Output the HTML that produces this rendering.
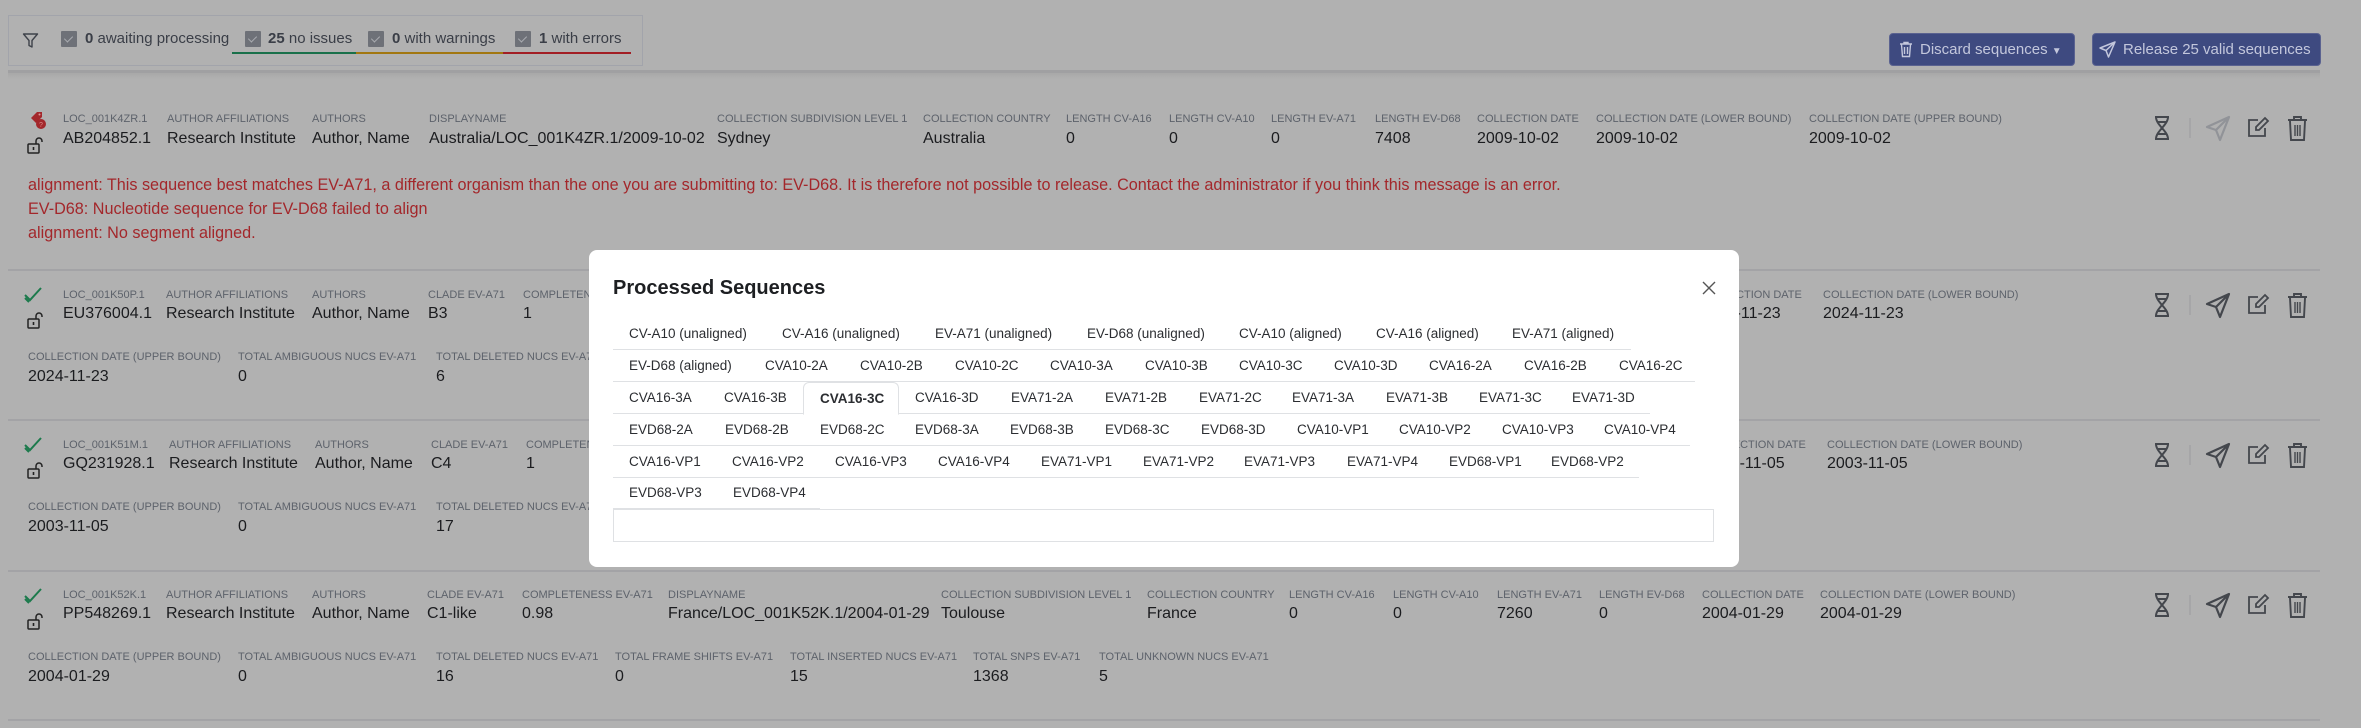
<!DOCTYPE html>
<html><head><meta charset="utf-8"><style>
*{margin:0;padding:0;box-sizing:border-box}
body{width:2361px;height:728px;background:#b1b1b1;font-family:"Liberation Sans",sans-serif;position:relative;overflow:hidden;color:#1d1f22}
.a{position:absolute;white-space:nowrap}
.l{position:absolute;white-space:nowrap;font-size:11px;color:#5d626b;text-transform:uppercase;line-height:14px}
.v{position:absolute;white-space:nowrap;font-size:16px;color:#1b1c1f;line-height:20px}
.sep{position:absolute;left:8px;width:2312px;height:2px;background:#a3a3a6}
.err{position:absolute;left:28px;font-size:16.2px;color:#a3272b;white-space:nowrap;line-height:20px}
.cb{position:absolute;top:31px;width:16px;height:16px;background:#6e7178;border-radius:1px}
.cb:after{content:"";position:absolute;left:5px;top:3px;width:4px;height:7px;border:solid #a9abb0;border-width:0 1.5px 1.5px 0;transform:rotate(45deg)}
.ft{position:absolute;top:29px;font-size:15px;color:#3a3e47;line-height:20px;white-space:nowrap}
.btn{position:absolute;top:33px;height:33px;background:#3e4a80;border-radius:4px;color:#c3c7dc;font-size:15px;line-height:31px;white-space:nowrap;border:1px solid #5a6290}
.modal{position:absolute;left:589px;top:250px;width:1150px;height:317px;background:#fff;border-radius:8px}
.tr{position:absolute;left:613px;height:32px;border-bottom:1px solid #dfe1e4}
.t{position:absolute;top:0;height:32px;line-height:31px;font-size:13.5px;color:#2b2d31;white-space:nowrap;padding-left:16px}
.act{position:absolute;background:#fff;border:1px solid #dfe1e4;border-bottom:1px solid #fff;border-radius:6px 6px 0 0;font-weight:bold}
svg{position:absolute}
</style></head><body>

<div class="a" style="left:8px;top:15px;width:635px;height:51px;border:1px solid #a2a4ab"></div>
<svg style="left:22px;top:32px" width="17" height="17" viewBox="0 0 17 17"><path d="M1.5 2h14l-5.5 6.5v6.5l-3-1.5v-5z" fill="none" stroke="#3e424a" stroke-width="1.4" stroke-linejoin="round"/></svg>
<div class="cb" style="left:61px"></div><div class="ft" style="left:85px"><b>0</b> awaiting processing</div>
<div class="cb" style="left:245px"></div><div class="ft" style="left:268px"><b>25</b> no issues</div>
<div class="cb" style="left:368px"></div><div class="ft" style="left:392px"><b>0</b> with warnings</div>
<div class="cb" style="left:515px"></div><div class="ft" style="left:539px"><b>1</b> with errors</div>
<div class="a" style="left:232px;top:52px;width:124px;height:2px;background:#19704a"></div>
<div class="a" style="left:356px;top:52px;width:147px;height:2px;background:#a27710"></div>
<div class="a" style="left:503px;top:52px;width:128px;height:2px;background:#a21e24"></div>

<div class="btn" style="left:1889px;width:186px;padding-left:30px">Discard sequences <span style="font-size:10px">▼</span></div>
<svg style="left:1899px;top:41px" width="14" height="17" viewBox="0 0 14 17"><path d="M1 3h12M5 3V1.5h4V3M2.5 3.5l1 12h7l1-12M5.5 6v7M8.5 6v7" fill="none" stroke="#c3c7dc" stroke-width="1.4"/></svg>
<div class="btn" style="left:2092px;width:229px;padding-left:30px">Release 25 valid sequences</div>
<svg style="left:2099px;top:41px" width="17" height="17" viewBox="0 0 17 17"><path d="M16 1L1 7l6 2.5L9.5 16zM7 9.5L16 1" fill="none" stroke="#c3c7dc" stroke-width="1.5" stroke-linejoin="round"/></svg>

<div class="a" style="left:8px;top:70px;width:2312px;height:3px;background:#a0a0a2"></div>
<div class="a" style="left:8px;top:73px;width:2312px;height:6px;background:linear-gradient(#a8a8a8,#b1b1b1)"></div>

<svg style="left:29px;top:111px" width="18" height="19" viewBox="0 0 18 19"><path d="M2 7L8 1h5v5L7 12z" fill="#a3272b"/><circle cx="12" cy="13" r="5" fill="#a3272b"/><text x="12" y="16" font-size="7" fill="#d88" text-anchor="middle" font-family="Liberation Sans">?</text><circle cx="10.5" cy="3.5" r="1" fill="#d99"/></svg>
<svg style="left:27px;top:137px" width="18" height="17" viewBox="0 0 18 17"><rect x="1" y="7" width="11" height="9" rx="1" fill="none" stroke="#222" stroke-width="1.5"/><path d="M9 7V4a3 3 0 0 1 6 0v1" fill="none" stroke="#222" stroke-width="1.5"/><path d="M6.5 10v3" stroke="#222" stroke-width="1.6"/></svg>
<div class="l" style="left:63px;top:112px">LOC_001K4ZR.1</div><div class="v" style="left:63px;top:129px">AB204852.1</div>
<div class="l" style="left:167px;top:112px">Author affiliations</div><div class="v" style="left:167px;top:129px">Research Institute</div>
<div class="l" style="left:312px;top:112px">Authors</div><div class="v" style="left:312px;top:129px">Author, Name</div>
<div class="l" style="left:429px;top:112px">displayName</div><div class="v" style="left:429px;top:129px">Australia/LOC_001K4ZR.1/2009-10-02</div>
<div class="l" style="left:717px;top:112px">Collection subdivision level 1</div><div class="v" style="left:717px;top:129px">Sydney</div>
<div class="l" style="left:923px;top:112px">Collection country</div><div class="v" style="left:923px;top:129px">Australia</div>
<div class="l" style="left:1066px;top:112px">Length CV-A16</div><div class="v" style="left:1066px;top:129px">0</div>
<div class="l" style="left:1169px;top:112px">Length CV-A10</div><div class="v" style="left:1169px;top:129px">0</div>
<div class="l" style="left:1271px;top:112px">Length EV-A71</div><div class="v" style="left:1271px;top:129px">0</div>
<div class="l" style="left:1375px;top:112px">Length EV-D68</div><div class="v" style="left:1375px;top:129px">7408</div>
<div class="l" style="left:1477px;top:112px">Collection date</div><div class="v" style="left:1477px;top:129px">2009-10-02</div>
<div class="l" style="left:1596px;top:112px">Collection date (lower bound)</div><div class="v" style="left:1596px;top:129px">2009-10-02</div>
<div class="l" style="left:1809px;top:112px">Collection date (upper bound)</div><div class="v" style="left:1809px;top:129px">2009-10-02</div>
<div class="err" style="top:175px">alignment: This sequence best matches EV-A71, a different organism than the one you are submitting to: EV-D68. It is therefore not possible to release. Contact the administrator if you think this message is an error.</div>
<div class="err" style="top:199px">EV-D68: Nucleotide sequence for EV-D68 failed to align</div>
<div class="err" style="top:223px">alignment: No segment aligned.</div>

<div class="sep" style="top:269px"></div>
<div class="sep" style="top:419px"></div>
<div class="sep" style="top:570px"></div>
<div class="sep" style="top:719px"></div>

<svg style="left:24px;top:287px" width="18" height="16" viewBox="0 0 18 16"><path d="M1 8l5 5L17 1M1 11l4 4" fill="none" stroke="#1c7a4c" stroke-width="2"/></svg>
<svg style="left:27px;top:312px" width="18" height="17" viewBox="0 0 18 17"><rect x="1" y="7" width="11" height="9" rx="1" fill="none" stroke="#222" stroke-width="1.5"/><path d="M9 7V4a3 3 0 0 1 6 0v1" fill="none" stroke="#222" stroke-width="1.5"/><path d="M6.5 10v3" stroke="#222" stroke-width="1.6"/></svg>
<div class="l" style="left:63px;top:288px">LOC_001K50P.1</div><div class="v" style="left:63px;top:304px">EU376004.1</div>
<div class="l" style="left:166px;top:288px">Author affiliations</div><div class="v" style="left:166px;top:304px">Research Institute</div>
<div class="l" style="left:312px;top:288px">Authors</div><div class="v" style="left:312px;top:304px">Author, Name</div>
<div class="l" style="left:428px;top:288px">Clade EV-A71</div><div class="v" style="left:428px;top:304px">B3</div>
<div class="l" style="left:523px;top:288px">Completeness EV-A71</div><div class="v" style="left:523px;top:304px">1</div>
<div class="l" style="left:1700px;top:288px">Collection date</div><div class="v" style="left:1700px;top:304px">2024-11-23</div>
<div class="l" style="left:1823px;top:288px">Collection date (lower bound)</div><div class="v" style="left:1823px;top:304px">2024-11-23</div>
<div class="l" style="left:28px;top:350px">Collection date (upper bound)</div><div class="v" style="left:28px;top:367px">2024-11-23</div>
<div class="l" style="left:238px;top:350px">Total ambiguous nucs EV-A71</div><div class="v" style="left:238px;top:367px">0</div>
<div class="l" style="left:436px;top:350px">Total deleted nucs EV-A71</div><div class="v" style="left:436px;top:367px">6</div>

<svg style="left:24px;top:437px" width="18" height="16" viewBox="0 0 18 16"><path d="M1 8l5 5L17 1M1 11l4 4" fill="none" stroke="#1c7a4c" stroke-width="2"/></svg>
<svg style="left:27px;top:462px" width="18" height="17" viewBox="0 0 18 17"><rect x="1" y="7" width="11" height="9" rx="1" fill="none" stroke="#222" stroke-width="1.5"/><path d="M9 7V4a3 3 0 0 1 6 0v1" fill="none" stroke="#222" stroke-width="1.5"/><path d="M6.5 10v3" stroke="#222" stroke-width="1.6"/></svg>
<div class="l" style="left:63px;top:438px">LOC_001K51M.1</div><div class="v" style="left:63px;top:454px">GQ231928.1</div>
<div class="l" style="left:169px;top:438px">Author affiliations</div><div class="v" style="left:169px;top:454px">Research Institute</div>
<div class="l" style="left:315px;top:438px">Authors</div><div class="v" style="left:315px;top:454px">Author, Name</div>
<div class="l" style="left:431px;top:438px">Clade EV-A71</div><div class="v" style="left:431px;top:454px">C4</div>
<div class="l" style="left:526px;top:438px">Completeness EV-A71</div><div class="v" style="left:526px;top:454px">1</div>
<div class="l" style="left:1704px;top:438px">Collection date</div><div class="v" style="left:1704px;top:454px">2003-11-05</div>
<div class="l" style="left:1827px;top:438px">Collection date (lower bound)</div><div class="v" style="left:1827px;top:454px">2003-11-05</div>
<div class="l" style="left:28px;top:500px">Collection date (upper bound)</div><div class="v" style="left:28px;top:517px">2003-11-05</div>
<div class="l" style="left:238px;top:500px">Total ambiguous nucs EV-A71</div><div class="v" style="left:238px;top:517px">0</div>
<div class="l" style="left:436px;top:500px">Total deleted nucs EV-A71</div><div class="v" style="left:436px;top:517px">17</div>

<svg style="left:24px;top:588px" width="18" height="16" viewBox="0 0 18 16"><path d="M1 8l5 5L17 1M1 11l4 4" fill="none" stroke="#1c7a4c" stroke-width="2"/></svg>
<svg style="left:27px;top:613px" width="18" height="17" viewBox="0 0 18 17"><rect x="1" y="7" width="11" height="9" rx="1" fill="none" stroke="#222" stroke-width="1.5"/><path d="M9 7V4a3 3 0 0 1 6 0v1" fill="none" stroke="#222" stroke-width="1.5"/><path d="M6.5 10v3" stroke="#222" stroke-width="1.6"/></svg>
<div class="l" style="left:63px;top:588px">LOC_001K52K.1</div><div class="v" style="left:63px;top:604px">PP548269.1</div>
<div class="l" style="left:166px;top:588px">Author affiliations</div><div class="v" style="left:166px;top:604px">Research Institute</div>
<div class="l" style="left:312px;top:588px">Authors</div><div class="v" style="left:312px;top:604px">Author, Name</div>
<div class="l" style="left:427px;top:588px">Clade EV-A71</div><div class="v" style="left:427px;top:604px">C1-like</div>
<div class="l" style="left:522px;top:588px">Completeness EV-A71</div><div class="v" style="left:522px;top:604px">0.98</div>
<div class="l" style="left:668px;top:588px">displayName</div><div class="v" style="left:668px;top:604px">France/LOC_001K52K.1/2004-01-29</div>
<div class="l" style="left:941px;top:588px">Collection subdivision level 1</div><div class="v" style="left:941px;top:604px">Toulouse</div>
<div class="l" style="left:1147px;top:588px">Collection country</div><div class="v" style="left:1147px;top:604px">France</div>
<div class="l" style="left:1289px;top:588px">Length CV-A16</div><div class="v" style="left:1289px;top:604px">0</div>
<div class="l" style="left:1393px;top:588px">Length CV-A10</div><div class="v" style="left:1393px;top:604px">0</div>
<div class="l" style="left:1497px;top:588px">Length EV-A71</div><div class="v" style="left:1497px;top:604px">7260</div>
<div class="l" style="left:1599px;top:588px">Length EV-D68</div><div class="v" style="left:1599px;top:604px">0</div>
<div class="l" style="left:1702px;top:588px">Collection date</div><div class="v" style="left:1702px;top:604px">2004-01-29</div>
<div class="l" style="left:1820px;top:588px">Collection date (lower bound)</div><div class="v" style="left:1820px;top:604px">2004-01-29</div>
<div class="l" style="left:28px;top:650px">Collection date (upper bound)</div><div class="v" style="left:28px;top:667px">2004-01-29</div>
<div class="l" style="left:238px;top:650px">Total ambiguous nucs EV-A71</div><div class="v" style="left:238px;top:667px">0</div>
<div class="l" style="left:436px;top:650px">Total deleted nucs EV-A71</div><div class="v" style="left:436px;top:667px">16</div>
<div class="l" style="left:615px;top:650px">Total frame shifts EV-A71</div><div class="v" style="left:615px;top:667px">0</div>
<div class="l" style="left:790px;top:650px">Total inserted nucs EV-A71</div><div class="v" style="left:790px;top:667px">15</div>
<div class="l" style="left:973px;top:650px">Total SNPs EV-A71</div><div class="v" style="left:973px;top:667px">1368</div>
<div class="l" style="left:1099px;top:650px">Total unknown nucs EV-A71</div><div class="v" style="left:1099px;top:667px">5</div>

<svg style="left:0;top:0" width="2361" height="728">
<defs>
<g id="dna" fill="none" stroke="#44474d" stroke-width="2"><path d="M0 0h14M0 22h14M1 0c0 8 12 14 12 22M13 0c0 8-12 14-12 22M3 5h8M3 17h8"/></g>
<g id="snd" fill="none" stroke-width="2.2" stroke-linejoin="round"><path d="M23 1L1 11l9 3 4 10zM10 14L23 1"/></g>
<g id="edt" fill="none" stroke="#44474d" stroke-width="1.8"><path d="M10 2H1v16h16v-8"/><path d="M17 0l3 3-9 9H8v-3z"/></g>
<g id="trs" fill="none" stroke="#44474d" stroke-width="1.9"><path d="M0 3h19M6 3V0h7v3M2 4l1 19h13l1-19"/><path d="M7 8v11M9.5 8v11M12 8v11" stroke-width="1.4"/></g>
</defs>
<use href="#dna" x="2155" y="117"/><path d="M2190 118v20" stroke="#9b9b9e"/><use href="#snd" x="2206" y="116" stroke="#919398"/><use href="#edt" x="2248" y="118"/><use href="#trs" x="2288" y="117"/>
<use href="#dna" x="2155" y="294"/><path d="M2190 295v20" stroke="#9b9b9e"/><use href="#snd" x="2206" y="293" stroke="#44474d"/><use href="#edt" x="2248" y="295"/><use href="#trs" x="2288" y="294"/>
<use href="#dna" x="2155" y="444"/><path d="M2190 445v20" stroke="#9b9b9e"/><use href="#snd" x="2206" y="443" stroke="#44474d"/><use href="#edt" x="2248" y="445"/><use href="#trs" x="2288" y="444"/>
<use href="#dna" x="2155" y="594"/><path d="M2190 595v20" stroke="#9b9b9e"/><use href="#snd" x="2206" y="593" stroke="#44474d"/><use href="#edt" x="2248" y="595"/><use href="#trs" x="2288" y="594"/>
</svg>

<div class="modal"></div>
<div class="a" style="left:613px;top:275px;font-size:20px;font-weight:bold;color:#1d1f22;line-height:26px">Processed Sequences</div>
<svg style="left:1702px;top:281px" width="14" height="14" viewBox="0 0 14 14"><path d="M1 1l12 12M13 1L1 13" stroke="#555" stroke-width="1.4"/></svg>

<div class="tr" style="top:318px;width:1018px">
<div class="t" style="left:0">CV-A10 (unaligned)</div><div class="t" style="left:153px">CV-A16 (unaligned)</div><div class="t" style="left:306px">EV-A71 (unaligned)</div><div class="t" style="left:458px">EV-D68 (unaligned)</div><div class="t" style="left:610px">CV-A10 (aligned)</div><div class="t" style="left:747px">CV-A16 (aligned)</div><div class="t" style="left:883px">EV-A71 (aligned)</div>
</div>
<div class="tr" style="top:350px;width:1082px">
<div class="t" style="left:0">EV-D68 (aligned)</div><div class="t" style="left:136px">CVA10-2A</div><div class="t" style="left:231px">CVA10-2B</div><div class="t" style="left:326px">CVA10-2C</div><div class="t" style="left:421px">CVA10-3A</div><div class="t" style="left:516px">CVA10-3B</div><div class="t" style="left:610px">CVA10-3C</div><div class="t" style="left:705px">CVA10-3D</div><div class="t" style="left:800px">CVA16-2A</div><div class="t" style="left:895px">CVA16-2B</div><div class="t" style="left:990px">CVA16-2C</div>
</div>
<div class="tr" style="top:382px;width:1037px">
<div class="t" style="left:0">CVA16-3A</div><div class="t" style="left:95px">CVA16-3B</div><div class="t act" style="left:190px;width:96px;height:33px">CVA16-3C</div><div class="t" style="left:286px">CVA16-3D</div><div class="t" style="left:382px">EVA71-2A</div><div class="t" style="left:476px">EVA71-2B</div><div class="t" style="left:570px">EVA71-2C</div><div class="t" style="left:663px">EVA71-3A</div><div class="t" style="left:757px">EVA71-3B</div><div class="t" style="left:850px">EVA71-3C</div><div class="t" style="left:943px">EVA71-3D</div>
</div>
<div class="tr" style="top:414px;width:1077px">
<div class="t" style="left:0">EVD68-2A</div><div class="t" style="left:96px">EVD68-2B</div><div class="t" style="left:191px">EVD68-2C</div><div class="t" style="left:286px">EVD68-3A</div><div class="t" style="left:381px">EVD68-3B</div><div class="t" style="left:476px">EVD68-3C</div><div class="t" style="left:572px">EVD68-3D</div><div class="t" style="left:668px">CVA10-VP1</div><div class="t" style="left:770px">CVA10-VP2</div><div class="t" style="left:873px">CVA10-VP3</div><div class="t" style="left:975px">CVA10-VP4</div>
</div>
<div class="tr" style="top:446px;width:1026px">
<div class="t" style="left:0">CVA16-VP1</div><div class="t" style="left:103px">CVA16-VP2</div><div class="t" style="left:206px">CVA16-VP3</div><div class="t" style="left:309px">CVA16-VP4</div><div class="t" style="left:412px">EVA71-VP1</div><div class="t" style="left:514px">EVA71-VP2</div><div class="t" style="left:615px">EVA71-VP3</div><div class="t" style="left:718px">EVA71-VP4</div><div class="t" style="left:820px">EVD68-VP1</div><div class="t" style="left:922px">EVD68-VP2</div>
</div>
<div class="tr" style="top:477px;width:207px">
<div class="t" style="left:0">EVD68-VP3</div><div class="t" style="left:104px">EVD68-VP4</div>
</div>
<div class="a" style="left:613px;top:509px;width:1101px;height:33px;border:1px solid #dfe1e4"></div>

</body></html>
